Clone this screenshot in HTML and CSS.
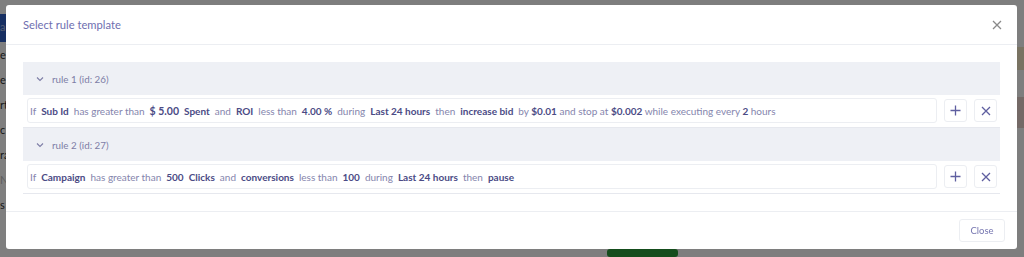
FILE: index.html
```html
<!DOCTYPE html>
<html lang="en">
<head>
    <meta charset="UTF-8">
    <meta name="viewport" content="width=device-width, initial-scale=1.0">
    <title>Rules</title>
    <link rel="stylesheet" href="styles.css">
</head>
<body>
    <div class="page">
        <div class="sidebar">
            <div class="nav-item active">a</div>
            <div class="nav-item">er</div>
            <div class="nav-item">e</div>
            <div class="nav-item">rt</div>
            <div class="nav-item">c</div>
            <div class="nav-item">ra</div>
            <div class="nav-item muted">N</div>
            <div class="nav-item">s</div>
        </div>
        <div class="content">
            <div class="stripe yellow"></div>
            <div class="stripe brown"></div>
            <div class="bottom-bar">
                <span class="green-btn"></span>
            </div>
        </div>
    </div>

    <div class="overlay">
        <div class="modal">
            <div class="modal-header">
                <span class="modal-title">Select rule template</span>
                <svg class="close-icon" width="10" height="10" viewBox="0 0 10 10">
                    <path d="M1 1L9 9M9 1L1 9" stroke="#8a8a8a" stroke-width="1.3" fill="none"/>
                </svg>
            </div>

            <div class="modal-body">
                <div class="rule">
                    <div class="rule-head">
                        <svg class="chevron" width="8" height="6" viewBox="0 0 8 6">
                            <path d="M1 1.5L4 4.5L7 1.5" stroke="#7d7da6" stroke-width="1.1" fill="none"/>
                        </svg>
                        <span>rule 1 (id: 26)</span>
                    </div>
                    <div class="rule-row">
                        <div class="rule-text">
                            <span class="w">If</span>
                            <b>Sub Id</b>
                            <span class="w">has greater than</span>
                            <b class="money">$ 5.00</b>
                            <b>Spent</b>
                            <span class="w">and</span>
                            <b>ROI</b>
                            <span class="w">less than</span>
                            <b>4.00 %</b>
                            <span class="w">during</span>
                            <b>Last 24 hours</b>
                            <span class="w">then</span>
                            <b>increase bid</b>
                            <span class="tail">by <b>$0.01</b> and stop at <b>$0.002</b> while executing every <b>2</b> hours</span>
                        </div>
                        <button class="icon-btn">
                            <svg width="11" height="11" viewBox="0 0 11 11"><path d="M5.5 0.5V10.5M0.5 5.5H10.5" stroke="#5f5fa0" stroke-width="1.3"/></svg>
                        </button>
                        <button class="icon-btn">
                            <svg width="10" height="10" viewBox="0 0 10 10"><path d="M1 1L9 9M9 1L1 9" stroke="#5f5fa0" stroke-width="1.3"/></svg>
                        </button>
                    </div>
                </div>

                <div class="rule">
                    <div class="rule-head">
                        <svg class="chevron" width="8" height="6" viewBox="0 0 8 6">
                            <path d="M1 1.5L4 4.5L7 1.5" stroke="#7d7da6" stroke-width="1.1" fill="none"/>
                        </svg>
                        <span>rule 2 (id: 27)</span>
                    </div>
                    <div class="rule-row">
                        <div class="rule-text">
                            <span class="w">If</span>
                            <b>Campaign</b>
                            <span class="w">has greater than</span>
                            <b>500</b>
                            <b>Clicks</b>
                            <span class="w">and</span>
                            <b>conversions</b>
                            <span class="w">less than</span>
                            <b>100</b>
                            <span class="w">during</span>
                            <b>Last 24 hours</b>
                            <span class="w">then</span>
                            <b>pause</b>
                        </div>
                        <button class="icon-btn">
                            <svg width="11" height="11" viewBox="0 0 11 11"><path d="M5.5 0.5V10.5M0.5 5.5H10.5" stroke="#5f5fa0" stroke-width="1.3"/></svg>
                        </button>
                        <button class="icon-btn">
                            <svg width="10" height="10" viewBox="0 0 10 10"><path d="M1 1L9 9M9 1L1 9" stroke="#5f5fa0" stroke-width="1.3"/></svg>
                        </button>
                    </div>
                </div>
            </div>

            <div class="modal-footer">
                <button class="close-btn">Close</button>
            </div>
        </div>
    </div>
</body>
</html>
```

FILE: styles.css
```css
* {
    box-sizing: border-box;
}

body {
    margin: 0;
    font-family: Lato, "Open Sans", sans-serif;
    background-color: #ffffff;
    height: 257px;
    overflow: hidden;
}

.page {
    display: flex;
    height: 257px;
}

.sidebar {
    width: 20px;
    padding-top: 14px;
    background-color: #ffffff;
}

.nav-item {
    height: 25px;
    line-height: 25px;
    font-size: 11px;
    color: #333;
    padding-left: 0;
    white-space: nowrap;
}

.nav-item.active {
    background-color: #2f5fc4;
    color: #a9bce6;
    height: 28px;
}

.nav-item.muted {
    color: #bbb;
}

.content {
    flex: 1;
    position: relative;
    background-color: #fcfcfc;
}

.stripe {
    position: absolute;
    right: 0;
    width: 20px;
}

.stripe.yellow {
    top: 47px;
    height: 23px;
    background-color: #f2e6c4;
}

.stripe.brown {
    top: 97px;
    height: 31px;
    background-color: #e8d3cc;
}

.bottom-bar {
    position: absolute;
    left: 0;
    right: 0;
    bottom: 0;
    height: 8px;
}

.green-btn {
    position: absolute;
    left: 587px;
    width: 71px;
    height: 8px;
    background-color: #2a9a3a;
    border-radius: 3px;
}

.overlay {
    position: fixed;
    inset: 0;
    background-color: rgba(0, 0, 0, 0.5);
    padding: 5px 7px 8px 6px;
}

.modal {
    background-color: #ffffff;
    border-radius: 3px;
    height: 244px;
    display: flex;
    flex-direction: column;
}

.modal-header {
    height: 40px;
    padding: 0 15px 0 17px;
    display: flex;
    align-items: center;
    justify-content: space-between;
    border-bottom: 1px solid #eceef2;
}

.modal-title {
    font-size: 11.2px;
    color: #6e6eb0;
}

.modal-body {
    padding: 17px 17px;
    flex: 1;
}

.rule {
    border-bottom: 1px solid #e6e8ee;
}

.rule-head {
    height: 33px;
    background-color: #eef0f5;
    display: flex;
    align-items: center;
    padding-left: 13px;
    font-size: 9.8px;
    color: #7d7da6;
}

.chevron {
    margin-right: 8px;
}

.rule-row {
    display: flex;
    align-items: center;
    gap: 6px;
    padding: 3px 3px 4px 4px;
}

.rule-text {
    flex: 1;
    height: 25px;
    border: 1px solid #eceef2;
    border-radius: 3px;
    display: flex;
    align-items: center;
    gap: 5px;
    padding-left: 2px;
    font-size: 10px;
    color: #8585ad;
    white-space: nowrap;
}

.rule-text b {
    color: #4b4b85;
    font-weight: 700;
}

.rule-text .money {
    font-size: 10.5px;
}

.tail b {
    color: #4b4b85;
}

.icon-btn {
    width: 23px;
    height: 23px;
    border: 1px solid #eceef2;
    border-radius: 3px;
    background-color: #ffffff;
    padding: 0;
    display: flex;
    align-items: center;
    justify-content: center;
    margin-left: 1px;
}

.modal-footer {
    height: 38px;
    border-top: 1px solid #eceef2;
    display: flex;
    align-items: center;
    justify-content: flex-end;
    padding-right: 12px;
}

.close-btn {
    height: 23px;
    width: 46px;
    border: 1px solid #eceef2;
    border-radius: 3px;
    background-color: #ffffff;
    font-family: Lato, sans-serif;
    font-size: 9.5px;
    color: #7676b0;
    padding: 0;
}
```
